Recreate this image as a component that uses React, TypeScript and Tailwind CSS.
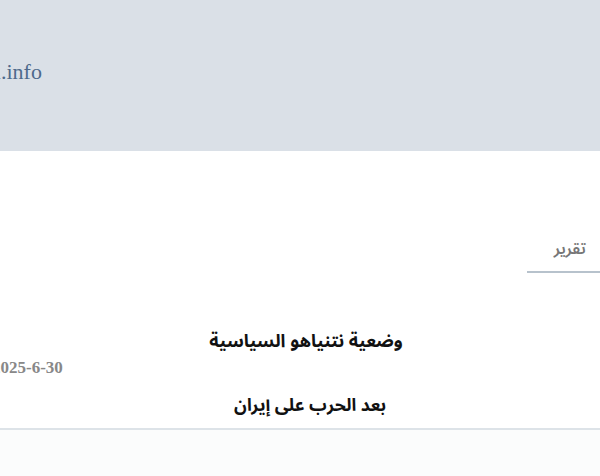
export default function App() {
  return (
    <div className="w-[600px] h-[476px] overflow-hidden bg-white" style={{ fontFamily: '"Noto Sans Arabic", "Noto Sans", "DejaVu Sans", sans-serif' }}>
      <div className="h-[151px] bg-[#dae0e7] flex items-center">
        <span className="-ml-[43px] -mt-[8px] text-[22px] text-[#4d6a8c] font-['Liberation_Serif',serif]">daral.info</span>
      </div>
      <div className="flex justify-end pt-[86px]">
        <div dir="rtl" className="w-[73px] pr-[14px] pb-[10px] border-b-2 border-[#b7c2cc] text-[16px] font-semibold text-[#777]">
          تقرير
        </div>
      </div>
      <div className="relative h-[157px] border-b-2 border-[#dde3e8]">
        <div className="pt-[55px] flex justify-center pl-[12px]">
          <h1 dir="rtl" className="text-[18px] font-bold text-[#111]">وضعية نتنياهو السياسية</h1>
        </div>
        <div className="-ml-[8px] text-[17px] font-bold text-[#888] font-['Liberation_Serif',serif]">2025-6-30</div>
        <div className="mt-[12px] flex justify-center pl-[20px]">
          <h2 dir="rtl" className="text-[17.5px] font-bold text-[#111]">بعد الحرب على إيران</h2>
        </div>
      </div>
      <div className="h-full bg-[#fbfcfc]" />
    </div>
  );
}
